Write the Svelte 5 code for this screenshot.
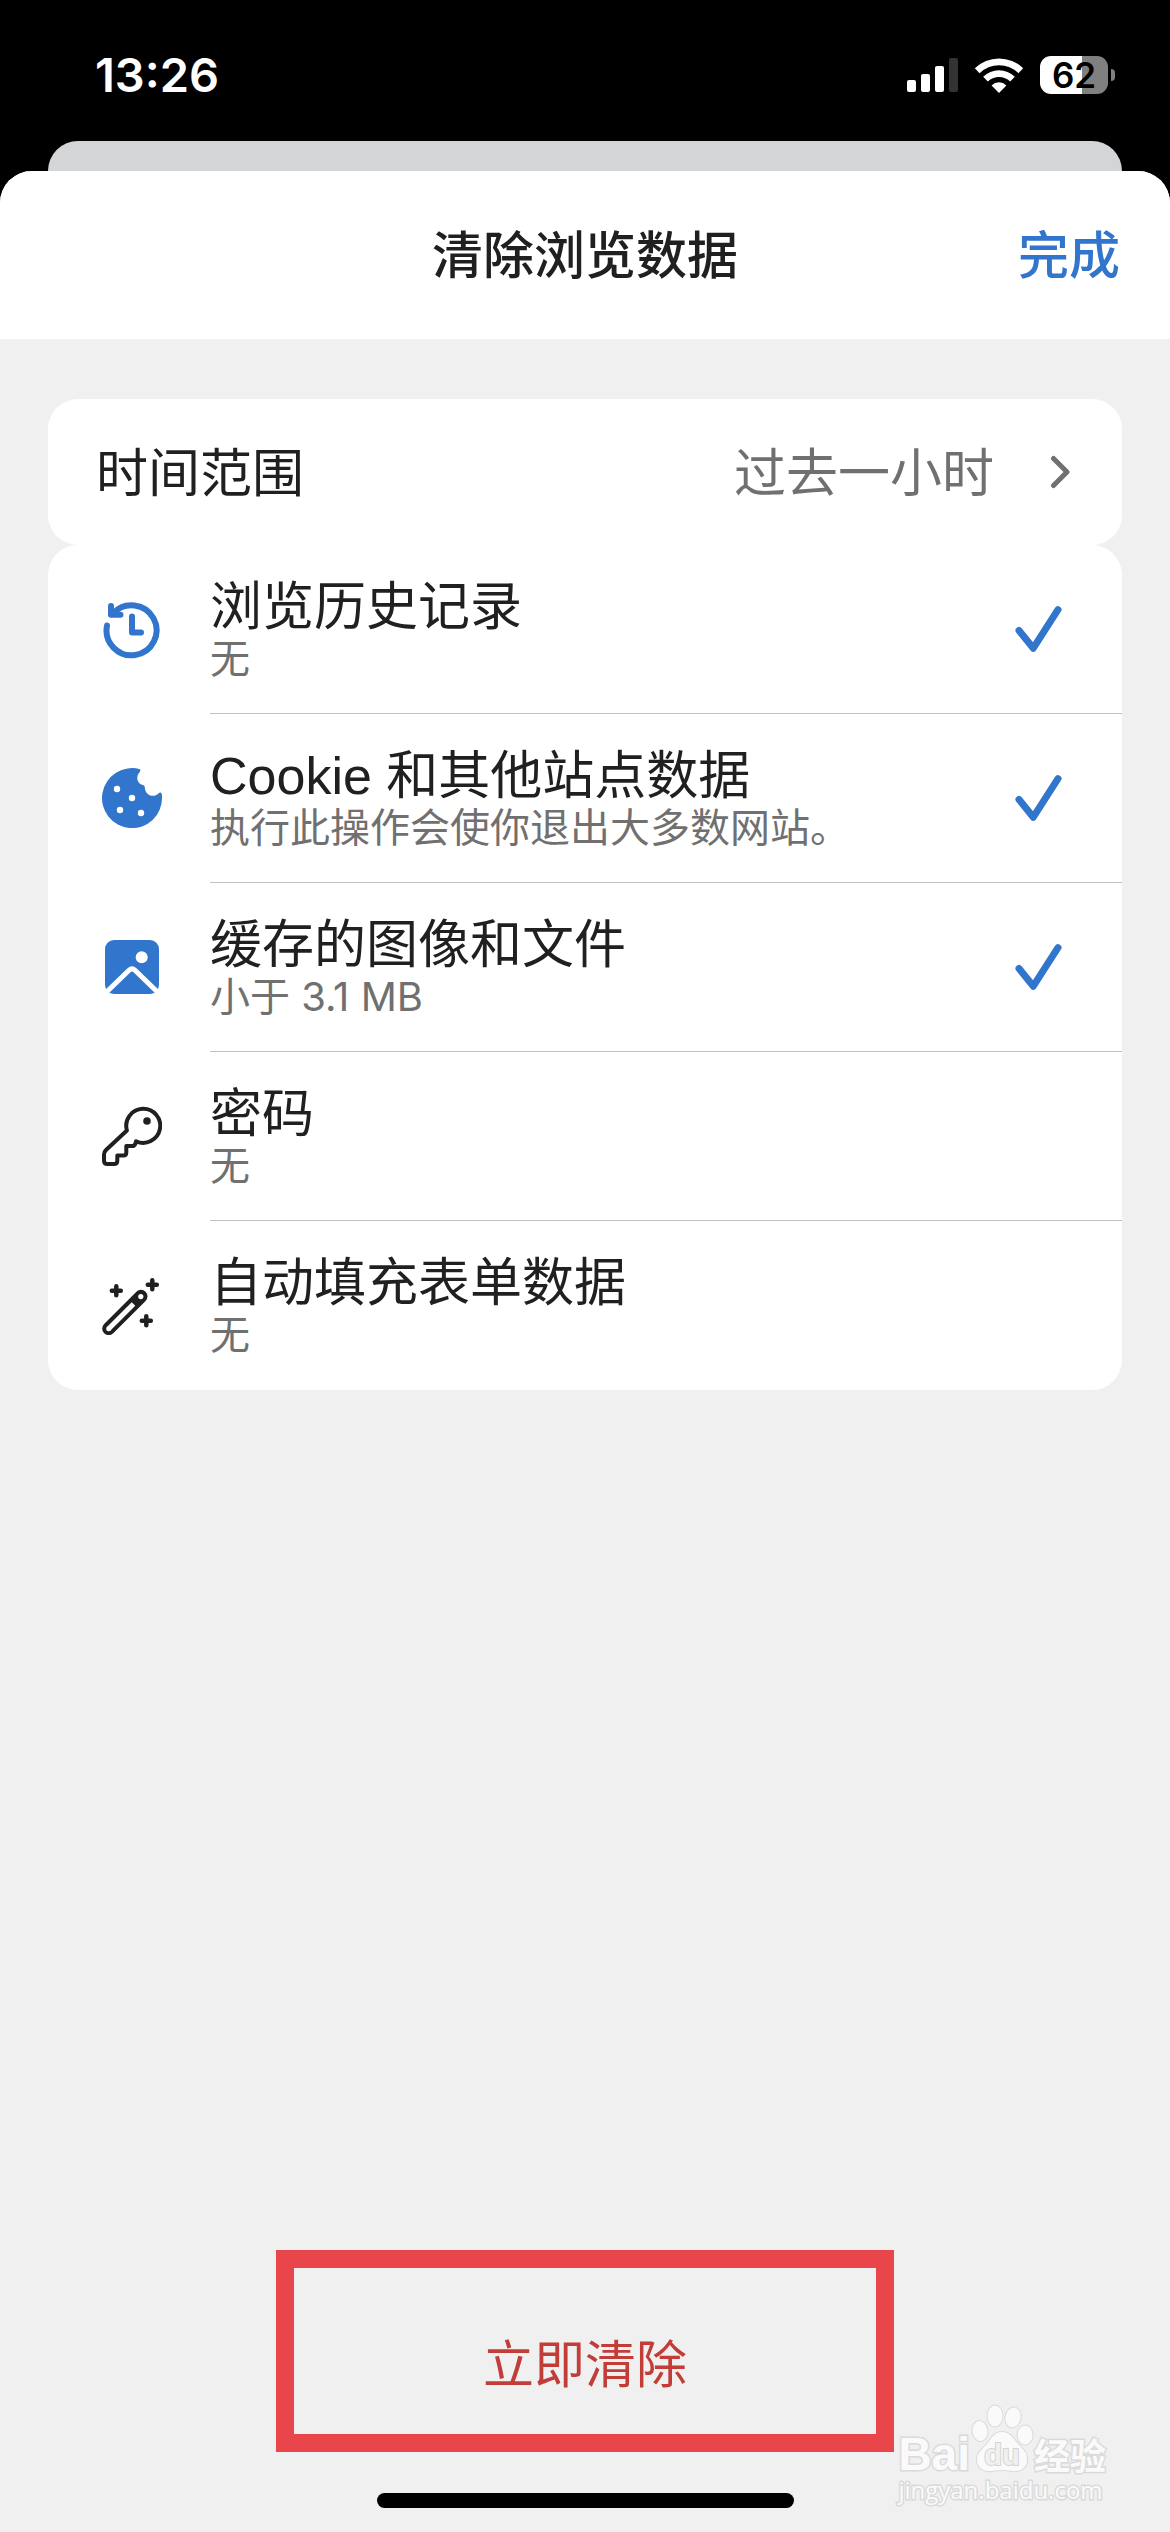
<script>
  let items = $state([
    { id: 'history', title: '浏览历史记录', detail: '无', checked: true },
    { id: 'cookie', title: 'Cookie 和其他站点数据', detail: '执行此操作会使你退出大多数网站。', checked: true },
    { id: 'image', title: '缓存的图像和文件', detail: '小于 3.1 MB', checked: true },
    { id: 'key', title: '密码', detail: '无', checked: false },
    { id: 'wand', title: '自动填充表单数据', detail: '无', checked: false }
  ]);
</script>

<div class="screen">
  <div class="status">
    <time>13:26</time>
    <div class="indicators">
      <svg class="signal" viewBox="0 0 51 36" aria-hidden="true">
        <rect x="0" y="23" width="9" height="12" rx="2" />
        <rect x="14" y="17" width="9" height="18" rx="2" />
        <rect x="28" y="9" width="9" height="26" rx="2" />
        <rect class="dim" x="42" y="1" width="9" height="34" rx="2" />
      </svg>
      <svg class="wifi" viewBox="0 0 50 36" aria-hidden="true">
        <path d="M25 36 L17.6 28.4 A10.5 10.5 0 0 1 32.4 28.4 Z" />
        <path d="M13.8 24.6 L9.2 19.8 A22.5 22.5 0 0 1 40.8 19.8 L36.2 24.6 A16 16 0 0 0 13.8 24.6 Z" />
        <path d="M5.6 16.2 L0.8 11.3 A34.5 34.5 0 0 1 49.2 11.3 L44.4 16.2 A27.5 27.5 0 0 0 5.6 16.2 Z" />
      </svg>
      <div class="battery"><span>62</span></div>
    </div>
  </div>
  <div class="behind"></div>

  <main class="sheet">
    <header>
      <h1>清除浏览数据</h1>
      <button class="done" type="button">完成</button>
    </header>

    <div class="body">
      <button class="card range" type="button">
        <span>时间范围</span>
        <span class="value">过去一小时</span>
        <svg class="chevron" viewBox="0 0 20 36" aria-hidden="true"><path d="M3.5 4.5 17 18 3.5 31.5" /></svg>
      </button>

      <ul class="card">
        {#each items as item (item.id)}
          <li>
            <label>
              <svg class="icon" class:active={item.checked} viewBox="0 0 60 60" aria-hidden="true">
                {#if item.id === 'history'}
                  <g class="line thick">
                    <path d="M5 26.5A25 25 0 1 0 11 14.5" />
                    <path d="M9 7v8.8h9.5" />
                    <path d="M30 17.5v16h9" />
                  </g>
                {:else if item.id === 'cookie'}
                  <path
                    class="solid"
                    d="M38 1.2A30 30 0 1 0 60 29.5C60 27.6 60 25.6 59 24.8C57.8 23.8 57 25 55.5 26.3C50 30.2 42.8 26 42.8 19.5C42.8 17.8 42 17.4 40.6 17C34.5 15 34.2 8.6 37 5C38.2 3.6 38.8 1.8 38 1.2Z"
                  />
                  <g class="hole">
                    <circle cx="15" cy="21" r="3.2" />
                    <circle cx="30" cy="30" r="3.2" />
                    <circle cx="18" cy="42" r="3.2" />
                    <circle cx="39" cy="45" r="3.2" />
                  </g>
                {:else if item.id === 'image'}
                  <rect class="solid" x="3" y="3" width="54" height="54" rx="9" />
                  <circle class="hole" cx="39.7" cy="20.3" r="6" />
                  <path class="ridge" d="M3 56.5 27 33.3Q30 30.4 33 33.3L57 56.5" />
                {:else if item.id === 'key'}
                  <path
                    class="line"
                    d="M24.9 24.5 4 44Q2 46 2 48.5V54.5Q2 58 5.5 58H12Q15.3 58 15.3 55V49.5H21.5Q24.3 49.5 24.3 46.5V40H30.5Q33.5 40 34 35.2A17 17 0 1 0 24.9 24.5Z"
                  />
                  <circle class="solid" cx="45" cy="15" r="3.8" />
                {:else}
                  <path class="stick" d="M6.7 53.7 39 21.3" />
                  <path class="core" d="M6.7 53.7 31.5 28.9" />
                  <circle class="hole" cx="6.7" cy="53.7" r="2.5" />
                  <circle class="hole" cx="38.8" cy="21.6" r="2.6" />
                  <path class="line spark" d="M14.3 11.2v9M9.8 15.7h9M50.3 5.2v9M45.8 9.7h9M44.3 41.2v9M39.8 45.7h9" />
                {/if}
              </svg>
              <span class="text">
                <span class="title">{item.title}</span>
                <span class="detail">{item.detail}</span>
              </span>
              <input type="checkbox" bind:checked={item.checked} />
              <svg class="tick" viewBox="0 0 48 48" aria-hidden="true"><path d="M5 25.5 19.3 43.2 44 4.7" /></svg>
            </label>
          </li>
        {/each}
      </ul>
    </div>

    <footer>
      <div class="frame"><button class="clear" type="button">立即清除</button></div>
      <div class="home"></div>
    </footer>
  </main>

  <div class="mark">
    <div class="brand">
      <span class="bai">Bai</span>
      <svg viewBox="0 0 64 70" aria-hidden="true">
        <ellipse cx="10" cy="27" rx="7.5" ry="10" transform="rotate(-8 10 27)" />
        <ellipse cx="25" cy="12" rx="7.5" ry="10.5" />
        <ellipse cx="43" cy="13.5" rx="7.5" ry="10" transform="rotate(12 43 13.5)" />
        <ellipse cx="55" cy="31" rx="7.5" ry="9.5" />
        <path d="M32 28C40 28 43 34 48 40C54 46 58 50 57 57C56 65 49 68 42 67C35 65.5 29 65.5 22 67C14 68 7 64 7 56C7 49 12 45 17 40C22 34 24 28 32 28Z" />
        <text x="32" y="61" text-anchor="middle">du</text>
      </svg>
      <span class="exp">经验</span>
    </div>
    <div class="url">jingyan.baidu.com</div>
  </div>
</div>

<style>
  :global(body) {
    margin: 0;
    background: #000;
  }
  .screen {
    position: relative;
    display: flex;
    flex-direction: column;
    min-height: 100vh;
    background: #000;
    color: #202020;
    font-family: Inter, 'Noto Sans CJK SC', sans-serif;
    font-size: 52px;
    line-height: 60px;
  }
  button {
    margin: 0;
    padding: 0;
    border: 0;
    background: none;
    color: inherit;
    font: inherit;
  }
  svg {
    flex: none;
    display: block;
  }

  .status {
    display: flex;
    justify-content: space-between;
    align-items: center;
    height: 141px;
    padding: 8px 54px 0 95px;
    box-sizing: border-box;
    color: #fff;
  }
  time {
    font-size: 47px;
    font-weight: 600;
  }
  .indicators {
    display: flex;
    align-items: center;
    gap: 16px;
  }
  .indicators svg {
    fill: #fff;
    height: 36px;
  }
  .signal {
    width: 51px;
  }
  .signal .dim {
    fill: #333;
  }
  .wifi {
    width: 50px;
  }
  .battery {
    position: relative;
    width: 68px;
    height: 38px;
    margin-right: 8px;
    border-radius: 11px;
    background: linear-gradient(90deg, #fff 62%, #808080 62%);
    color: #000;
    font-size: 35px;
    font-weight: 600;
    line-height: 38px;
    text-align: center;
  }
  .battery::after {
    content: '';
    position: absolute;
    top: 13px;
    right: -7px;
    width: 4px;
    height: 12px;
    border-radius: 0 6px 6px 0;
    background: #808080;
  }

  .behind {
    height: 60px;
    margin: 0 48px -30px;
    border-radius: 30px 30px 0 0;
    background: #d4d5d7;
  }
  .sheet {
    position: relative;
    flex: 1;
    display: flex;
    flex-direction: column;
    overflow: hidden;
    border-radius: 32px 32px 0 0;
    background: #f0f0f0;
  }
  header {
    display: grid;
    grid-template-columns: 1fr auto 1fr;
    align-items: center;
    height: 168px;
    padding: 2px 50px 0;
    box-sizing: border-box;
    background: #fff;
    font-size: 51px;
  }
  h1 {
    grid-column: 2;
    margin: 0;
    font-size: 51px;
    font-weight: 500;
  }
  .done {
    justify-self: end;
    color: #3275cd;
    font-weight: 500;
  }

  .body {
    flex: 1;
    padding: 60px 48px;
  }
  .card {
    display: block;
    width: 100%;
    box-sizing: border-box;
    margin: 0;
    padding: 0;
    border-radius: 30px;
    background: #fff;
    list-style: none;
  }
  .range {
    display: flex;
    align-items: center;
    height: 146px;
    padding: 0 52px 0 48px;
    text-align: left;
  }
  .range span {
    padding-top: 4px;
  }
  .value {
    margin-left: auto;
    color: #707070;
  }
  .chevron {
    width: 20px;
    height: 36px;
    margin-left: 56px;
    fill: none;
    stroke: #707070;
    stroke-width: 5;
    stroke-linecap: round;
    stroke-linejoin: round;
  }
  label {
    position: relative;
    display: flex;
    align-items: center;
    height: 168px;
    padding: 0 60px 1px 54px;
  }
  li:not(:last-child) label::after {
    content: '';
    position: absolute;
    left: 162px;
    right: 0;
    bottom: 0;
    height: 1px;
    background: #c2c2c4;
  }
  .text {
    display: flex;
    flex: 1;
    flex-direction: column;
    margin-left: 48px;
  }
  .title {
    font-family: 'Liberation Sans', 'Noto Sans CJK SC', sans-serif;
    line-height: 60px;
  }
  .detail {
    color: #707070;
    font-size: 40px;
    line-height: 44px;
  }
  input {
    appearance: none;
    width: 0;
    height: 0;
    margin: 0;
  }
  .tick {
    width: 48px;
    height: 48px;
    visibility: hidden;
    fill: none;
    stroke: #3275cd;
    stroke-width: 7;
    stroke-linecap: round;
    stroke-linejoin: round;
  }
  input:checked + .tick {
    visibility: visible;
  }

  .icon {
    width: 60px;
    height: 60px;
    color: #202020;
  }
  .icon.active {
    color: #3275cd;
  }
  .line,
  .ridge,
  .stick,
  .core {
    fill: none;
    stroke: currentColor;
    stroke-width: 4;
    stroke-linecap: round;
    stroke-linejoin: round;
  }
  .thick {
    stroke-width: 6;
  }
  .spark {
    stroke-width: 4.5;
  }
  .stick {
    stroke-width: 13;
  }
  .core {
    stroke: #fff;
    stroke-width: 5;
    stroke-linecap: butt;
  }
  .ridge {
    stroke: #fff;
    stroke-width: 5;
    stroke-linecap: butt;
  }
  .solid {
    fill: currentColor;
  }
  .hole {
    fill: #fff;
  }

  footer {
    display: flex;
    flex-direction: column;
    align-items: center;
    padding-bottom: 24px;
  }
  .frame {
    width: 618px;
    height: 202px;
    box-sizing: border-box;
    border: 18px solid #e8464b;
  }
  .clear {
    width: 100%;
    height: 100%;
    padding-top: 28px;
    color: #c23d38;
    font-size: 51px;
  }
  .home {
    width: 417px;
    height: 15px;
    margin-top: 41px;
    border-radius: 8px;
    background: #000;
  }

  .mark {
    position: absolute;
    right: 64px;
    bottom: 26px;
    color: #fafafa;
    -webkit-text-stroke: 3px #dadada;
    paint-order: stroke fill;
  }
  .brand {
    display: flex;
    align-items: flex-end;
    line-height: 40px;
  }
  .bai {
    font-family: 'Liberation Sans', sans-serif;
    font-size: 46px;
    font-weight: 700;
  }
  .brand svg {
    width: 64px;
    height: 70px;
    fill: #fafafa;
    stroke: #dadada;
    stroke-width: 2;
  }
  .brand text {
    fill: #f0f0f0;
    stroke: #d4d4d4;
    font-family: 'Liberation Sans', sans-serif;
    font-size: 29px;
    font-weight: 700;
  }
  .exp {
    font-family: 'Noto Sans CJK SC', sans-serif;
    font-size: 36px;
    font-weight: 700;
  }
  .url {
    font-family: 'Open Sans', sans-serif;
    font-size: 24px;
    line-height: 32px;
  }
</style>
